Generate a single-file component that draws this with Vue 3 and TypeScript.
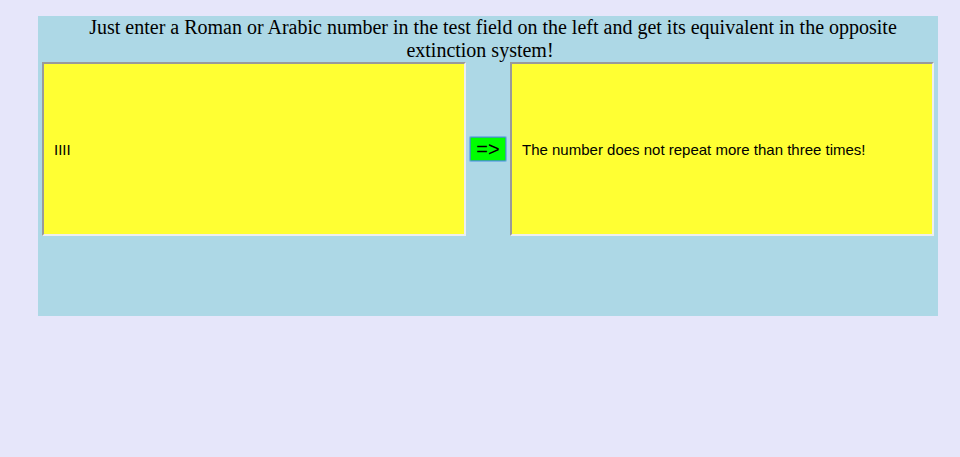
<script setup lang="ts">
import { ref } from 'vue'

const source = ref('IIII')
const result = ref('The number does not repeat more than three times!')

const digits: [number, string][] = [
  [1000, 'M'], [900, 'CM'], [500, 'D'], [400, 'CD'], [100, 'C'], [90, 'XC'],
  [50, 'L'], [40, 'XL'], [10, 'X'], [9, 'IX'], [5, 'V'], [4, 'IV'], [1, 'I'],
]

function convert(): void {
  const text = source.value.trim().toUpperCase()
  if (/([IXCM])\1{3}/.test(text)) {
    result.value = 'The number does not repeat more than three times!'
    return
  }
  if (/^\d+$/.test(text)) {
    let rest = Number(text)
    let roman = ''
    for (const [value, symbol] of digits) {
      while (rest >= value && roman.length < 20) {
        roman += symbol
        rest -= value
      }
    }
    result.value = roman
    return
  }
  let total = 0
  let index = 0
  for (const [value, symbol] of digits) {
    while (text.startsWith(symbol, index)) {
      total += value
      index += symbol.length
    }
  }
  result.value = total > 0 ? String(total) : ''
}
</script>

<template>
  <main class="panel">
    <p class="intro">
      Just enter a Roman or Arabic number in the test field on the left and get its equivalent in the opposite extinction system!
    </p>
    <form class="converter" @submit.prevent="convert">
      <input v-model="source" class="field" type="text" aria-label="Number" />
      <button class="convert" type="submit" aria-label="=> Convert">=&gt;</button>
      <input v-model="result" class="field" type="text" aria-label="Equivalent" readonly />
    </form>
  </main>
</template>

<style>
body {
  background: #e6e6fa;
}
</style>

<style scoped>
.panel {
  box-sizing: border-box;
  min-height: 300px;
  margin: 16px 22px 16px 38px;
  background: #add8e6;
}

.intro {
  margin: 0;
  padding-right: 16px;
  color: #000;
  font-family: "Liberation Serif", "Times New Roman", serif;
  font-size: 20px;
  line-height: 23px;
  text-align: center;
  text-indent: 26px;
}

.converter {
  display: flex;
  align-items: center;
  gap: 3px;
  padding: 0 4px;
}

.field {
  box-sizing: border-box;
  flex: 1 1 0;
  min-width: 0;
  height: 174px;
  padding: 0 10px;
  border: 2px solid;
  border-color: #9a9a9a #eee #eee #9a9a9a;
  border-radius: 0;
  background: #ffff33;
  color: #000;
  font-family: "Liberation Sans", Arial, sans-serif;
  font-size: 15px;
}

.convert {
  box-sizing: border-box;
  width: 36px;
  height: 24px;
  margin: 0 1px;
  padding: 0;
  border: 1px solid #36aa9c;
  border-radius: 1px;
  background: #00ff00;
  box-shadow: 0 0 0 1px #78b2e6;
  color: #000;
  font-family: "Liberation Sans", Arial, sans-serif;
  font-size: 20px;
  line-height: 20px;
}
</style>
